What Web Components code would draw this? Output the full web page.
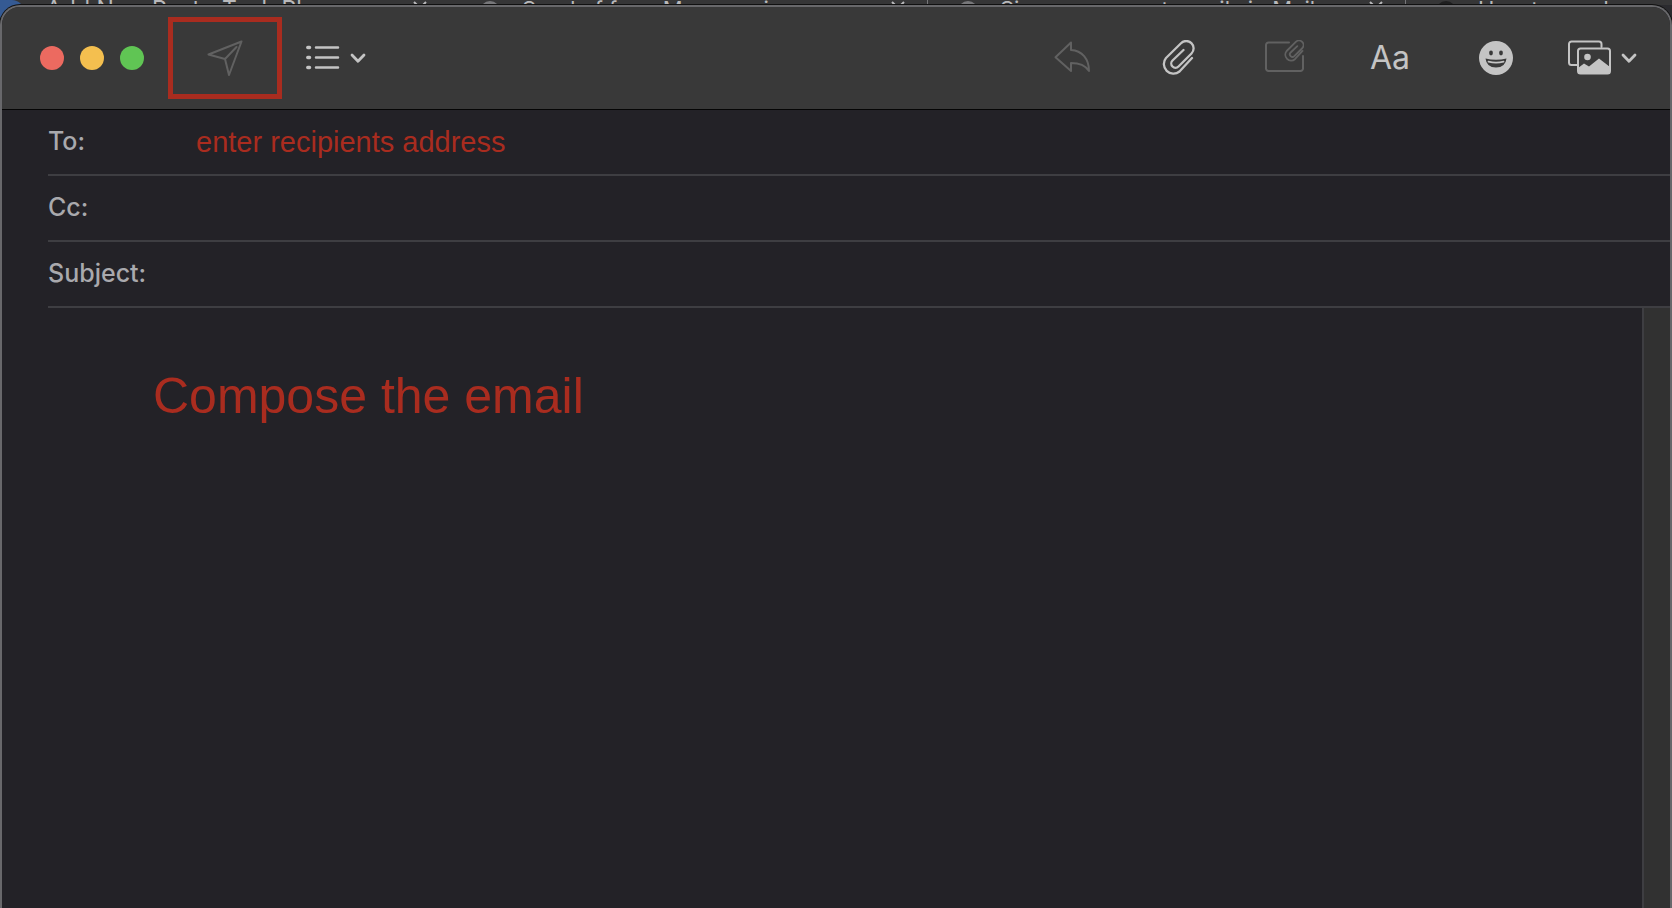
<!DOCTYPE html>
<html lang="en">
<head>
<meta charset="utf-8">
<title>New Message</title>
<style>
  html, body{
    height:100%;
  }
  body{
    margin:0;
    overflow:hidden;
    display:flex;
    flex-direction:column;
    background:#2b2b2f;
    font-family:Inter, "Liberation Sans", sans-serif;

    --toolbar:#393939;
    --surface:#232227;
    --line:#3e3e42;
    --edge:#68686b;
    --icon:#c4c4c4;
    --icon-off:#616161;
    --label:#a9a9ad;
    --mark:#a92c1f;
  }
</style>
</head>
<body>

<tab-strip>
  <browser-tab favicon>Add New Post ‹ Tech Pl</browser-tab>
  <browser-tab icon>Send of for a Message in</browser-tab>
  <browser-tab icon>Sign up account emails in Mail</browser-tab>
  <browser-tab icon>How to send</browser-tab>
</tab-strip>

<mail-window>
  <mail-toolbar slot="toolbar"></mail-toolbar>
  <mail-field slot="fields" label="To:" type="email" value="enter recipients address"></mail-field>
  <mail-field slot="fields" label="Cc:" type="email"></mail-field>
  <mail-field slot="fields" label="Subject:"></mail-field>
  <mail-body>Compose the email</mail-body>
</mail-window>

<script>
const icons = {
  send: `<svg width="36" height="36" viewBox="0 0 36 36"><path d="M34.5 1.5 1.5 14.5 18 19 22 35ZM18 19 29.5 7"/></svg>`,
  list: `<svg width="34" height="26" viewBox="0 0 34 26">
    <path stroke-width="2.5" d="M10 2.5H32M10 12.5H32M10 22.5H32"/>
    <path stroke-width="3.5" d="M1.8 2.5H3.5M1.8 12.5H3.5M1.8 22.5H3.5"/></svg>`,
  chevron: `<svg width="16" height="12" viewBox="0 0 16 12"><path stroke-width="2.8" d="M2 3 8 9.2 14 3"/></svg>`,
  reply: `<svg width="36" height="36" viewBox="0 0 36 36"><path d="M17 2.5 1.5 17.2 17 31V23C26 23 31 25 35 31 35 19 28 10.5 17 10Z"/></svg>`,
  clip: `<svg width="36" height="36" viewBox="0 0 36 36"><path stroke-width="2.3" d="M32 18 19.5 31.5A9.6 9.6 0 0 1 6 18L21 3.2A7.3 7.3 0 0 1 31.5 13.5L18.5 26.5A4.2 4.2 0 0 1 12.5 20.5L23.5 10"/></svg>`,
  markup: `<svg width="40" height="36" viewBox="0 0 40 36">
    <path d="M25 2.5H4.5A2.5 2.5 0 0 0 2 5V28.5A2.5 2.5 0 0 0 4.5 31H36.5A2.5 2.5 0 0 0 39 28.5V16"/>
    <path transform="translate(19 0) scale(.61)" stroke-width="3" d="M32 18 19.5 31.5A9.6 9.6 0 0 1 6 18L21 3.2A7.3 7.3 0 0 1 31.5 13.5L18.5 26.5A4.2 4.2 0 0 1 12.5 20.5L23.5 10"/></svg>`,
  emoji: `<svg width="36" height="36" viewBox="0 0 36 36">
    <circle cx="18" cy="18" r="17" fill="currentColor" stroke="none"/>
    <g fill="var(--toolbar)" stroke="none">
      <ellipse cx="13" cy="13" rx="1.9" ry="2.4"/><ellipse cx="23" cy="13" rx="1.9" ry="2.4"/>
      <path d="M7.5 18.5Q18 21 28.5 18.5 27.5 27.500 18 27.500 8.500 27.500 7.500 18.500Z"/></g>
    <path stroke-width="1.8" d="M10.500 21.600Q18 23.500 25.500 21.600"/></svg>`,
  photos: `<svg width="44" height="36" viewBox="0 0 44 36">
    <path d="M34.500 7V4A2.500 2.500 0 0 0 32 1.500H4.500A2.500 2.500 0 0 0 2 4V22.500A2.500 2.500 0 0 0 4.500 25H10"/>
    <rect x="11" y="8.500" width="32" height="25" rx="2.500"/>
    <circle cx="20.500" cy="17" r="3.300" fill="currentColor" stroke="none"/>
    <path fill="currentColor" stroke="none" d="M11 28 17 23.500 22 26.500 32 18.500 43 27V32Q43 34 41 34H13Q11 34 11 32Z"/></svg>`
};


class tabStrip extends HTMLElement {

  constructor() {
    super();
    const shadow = this.attachShadow({mode: 'open'});
    shadow.innerHTML = `
      <style>
        :host{
          display:flex;
          flex:none;
          height:5px;
          background:#363637;
          white-space:nowrap;
        }
        ::slotted(*){
          flex:0 0 478px;
        }
        ::slotted(:first-child){
          flex-basis:450px;
        }
        ::slotted(:last-child){
          flex:1 1 0;
          min-width:0;
          overflow:hidden;
        }
      </style>
      <slot></slot>
    `;
  }
}


class browserTab extends HTMLElement {

  constructor() {
    super();
    const shadow = this.attachShadow({mode: 'open'});
    shadow.innerHTML = `
      <style>
        :host{
          display:flex;
          align-items:flex-start;
          box-sizing:border-box;
          height:18px;
          font-size:22px;
          line-height:18px;
          color:#b9b9bb;
        }
        :host([favicon]){
          font-size:23px;
        }
        .mark{
          flex:none;
          width:46px;
          height:16px;
        }
        :host([icon]) .mark{
          box-sizing:border-box;
          width:72px;
          padding:1px 22px 0 30px;
        }
        :host([icon]) .mark::before{
          content:'';
          display:block;
          height:12px;
          border-radius:10px 10px 0 0;
          background:#77777a;
        }
        :host([icon]:last-child) .mark::before{
          background:#1f1f20;
        }
        :host([favicon]) .mark::before{
          content:'';
          display:block;
          width:24px;
          height:24px;
          border-radius:0 12px 12px 0;
          background:#355a93;
        }
        .title{
          flex-grow:1;
        }
        .close{
          width:30px;
          margin-right:14px;
          text-align:center;
        }
        .divider{
          width:1px;
          height:18px;
          background:#77777a;
        }
        :host([favicon]) .divider{
          background:none;
        }
        :host(:last-child) .close,
        :host(:last-child) .divider{
          display:none;
        }
      </style>
      <span class="mark"></span>
      <span class="title"><slot></slot></span>
      <svg class="close" width="14" height="14" viewBox="0 0 14 14" fill="none" stroke="currentColor" stroke-width="2"><path d="M1 2 13 14M13 2 1 14"/></svg>
      <span class="divider"></span>
    `;
  }
}


class mailWindow extends HTMLElement {

  constructor() {
    super();
    const shadow = this.attachShadow({mode: 'open'});
    shadow.innerHTML = `
      <style>
        :host{
          position:relative;
          display:flex;
          flex-direction:column;
          flex:1;
          min-height:0;
          box-sizing:border-box;
          border:2px solid var(--edge);
          border-bottom:0;
          border-radius:20px 20px 0 0;
          box-shadow:0 0 0 1px #111;
          background:var(--surface);
          overflow:hidden;
        }
        .fields{
          display:flex;
          flex-direction:column;
          padding-left:46px;
        }
      </style>
      <slot name="toolbar"></slot>
      <div class="fields"><slot name="fields"></slot></div>
      <slot></slot>
    `;
  }
}


class mailToolbar extends HTMLElement {

  constructor() {
    super();
    const shadow = this.attachShadow({mode: 'open'});
    shadow.innerHTML = `
      <style>
        :host{
          display:flex;
          flex:none;
          align-items:center;
          justify-content:space-between;
          height:102px;
          padding:0 30px 0 38px;
          background:var(--toolbar);
          border-bottom:1px solid #050505;
        }
        .group{
          display:flex;
          align-items:center;
          gap:24px;
        }
        .actions{
          gap:30px;
        }
        .lights{
          display:flex;
          gap:16px;
        }
        button{
          display:flex;
          align-items:center;
          justify-content:center;
          box-sizing:border-box;
          height:44px;
          padding:0;
          border:0;
          background:none;
          color:var(--icon);
          font:inherit;
        }
        button:disabled{
          color:var(--icon-off);
        }
        .light{
          width:24px;
          height:24px;
          border-radius:50%;
        }
        .close{background:#ec6a60;}
        .minimize{background:#f4bf4f;}
        .zoom{background:#60c554;}
        .send{
          width:114px;
          height:82px;
          border:5px solid var(--mark);
        }
        .format{
          gap:10px;
        }
        .actions button{
          width:76px;
        }
        .actions .photos{
          gap:10px;
        }
        .fonts{
          font-size:32px;
          line-height:40px;
        }
        svg{
          flex:none;
          fill:none;
          stroke:currentColor;
          stroke-width:2;
          stroke-linecap:round;
          stroke-linejoin:round;
        }
      </style>
      <div class="group">
        <div class="lights">
          <button class="light close" aria-label="Close"></button>
          <button class="light minimize" aria-label="Minimize"></button>
          <button class="light zoom" aria-label="Zoom"></button>
        </div>
        <button class="send" aria-label="Send" disabled>${icons.send}</button>
        <button class="format" aria-label="Header fields">${icons.list}${icons.chevron}</button>
      </div>
      <div class="group actions">
        <button aria-label="Reply" disabled>${icons.reply}</button>
        <button aria-label="Attach">${icons.clip}</button>
        <button aria-label="Include attachments" disabled>${icons.markup}</button>
        <button class="fonts">Aa</button>
        <button aria-label="Emoji">${icons.emoji}</button>
        <button class="photos" aria-label="Photos">${icons.photos}${icons.chevron}</button>
      </div>
    `;
  }
}


class mailField extends HTMLElement {

  constructor() {
    super();
    const shadow = this.attachShadow({mode: 'open'});
    shadow.innerHTML = `
      <style>
        :host{
          display:flex;
          align-items:center;
          box-sizing:border-box;
          height:66px;
          padding-bottom:2px;
          border-bottom:2px solid var(--line);
        }
        label{
          flex:0 0 148px;
          font-size:25px;
          font-weight:500;
          line-height:32px;
          color:var(--label);
        }
        input{
          flex:1;
          min-width:0;
          padding:2px 0 0;
          border:0;
          outline:0;
          background:none;
          color:var(--mark);
          font-family:"Liberation Sans", sans-serif;
          font-size:29px;
          line-height:32px;
        }
      </style>
      <label for="field"></label>
      <input id="field">
    `;
  }

  connectedCallback() {
    const input = this.shadowRoot.getElementById('field');
    this.shadowRoot.querySelector('label').textContent = this.getAttribute('label');
    if(this.hasAttribute('type')) {
      input.type = this.getAttribute('type');
    }
    if(this.hasAttribute('value')) {
      input.value = this.getAttribute('value');
    }
  }
}


class mailBody extends HTMLElement {

  constructor() {
    super();
    const shadow = this.attachShadow({mode: 'open'});
    shadow.innerHTML = `
      <style>
        :host{
          display:flex;
          flex:1;
          min-height:0;
        }
        textarea{
          flex:1;
          min-width:0;
          box-sizing:border-box;
          padding:58px 48px 24px 151px;
          border:0;
          outline:0;
          resize:none;
          overflow:hidden;
          background:none;
          color:var(--mark);
          font-family:"Liberation Sans", sans-serif;
          font-size:50px;
          line-height:60px;
        }
        .scroll-track{
          width:26px;
          border-left:2px solid var(--line);
          background:#313131;
        }
      </style>
      <textarea aria-label="Message"></textarea>
      <div class="scroll-track"></div>
    `;
  }

  connectedCallback() {
    this.shadowRoot.querySelector('textarea').value = this.textContent.trim();
  }
}


customElements.define('tab-strip', tabStrip);
customElements.define('browser-tab', browserTab);
customElements.define('mail-window', mailWindow);
customElements.define('mail-toolbar', mailToolbar);
customElements.define('mail-field', mailField);
customElements.define('mail-body', mailBody);
</script>
</body>
</html>
